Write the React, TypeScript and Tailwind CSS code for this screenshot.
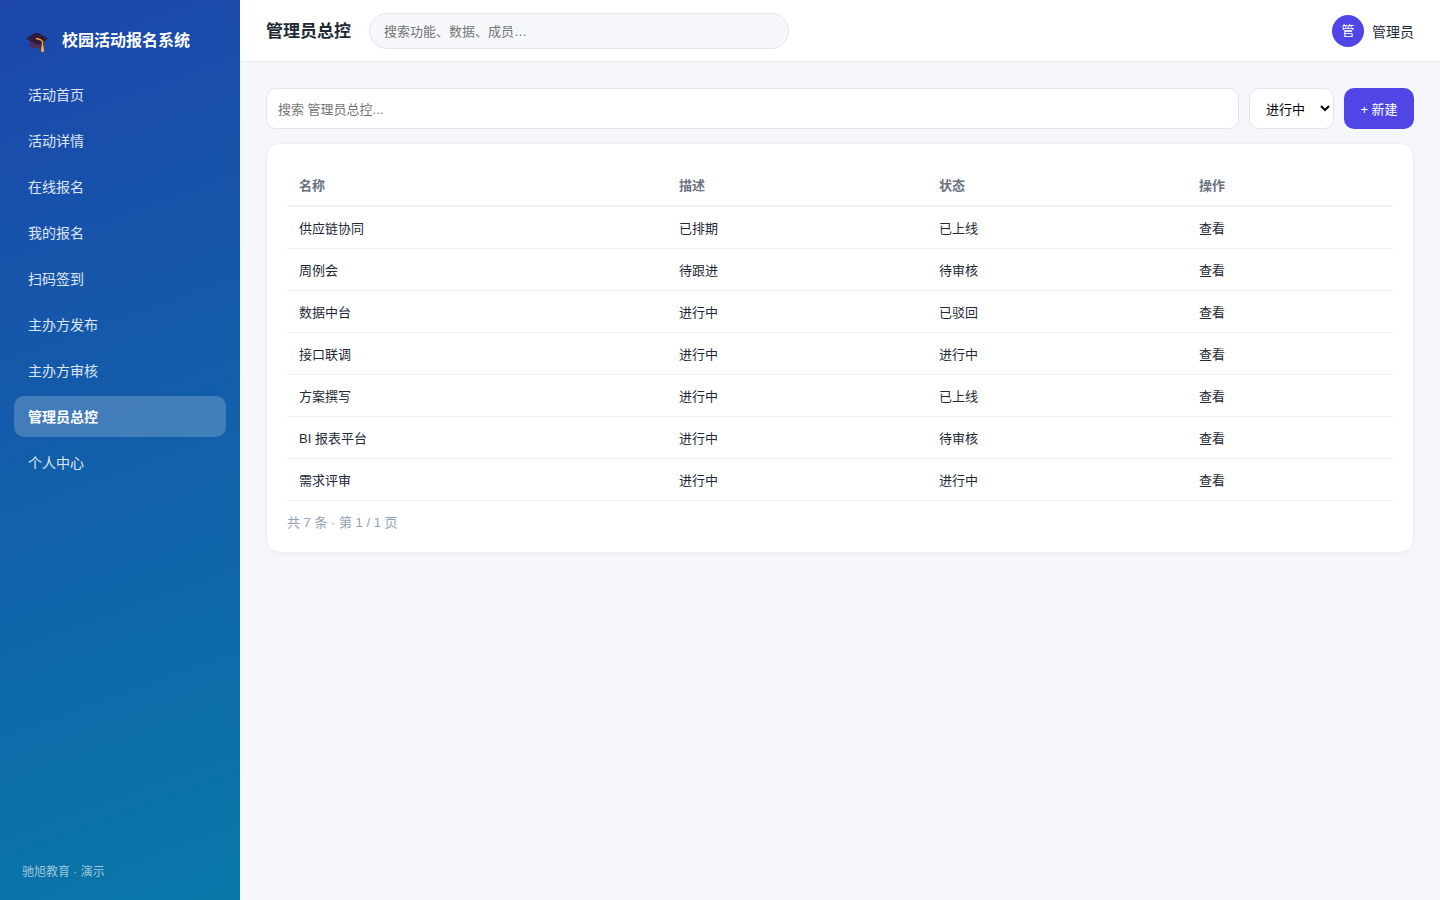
import React, { useState } from "react";

const navItems = [
  "活动首页",
  "活动详情",
  "在线报名",
  "我的报名",
  "扫码签到",
  "主办方发布",
  "主办方审核",
  "管理员总控",
  "个人中心",
];

const columns = [
  { label: "名称", width: "w-[380px]" },
  { label: "描述", width: "w-[260px]" },
  { label: "状态", width: "w-[260px]" },
  { label: "操作", width: "w-[206px]" },
];

const rows = [
  { name: "供应链协同", desc: "已排期", status: "已上线" },
  { name: "周例会", desc: "待跟进", status: "待审核" },
  { name: "数据中台", desc: "进行中", status: "已驳回" },
  { name: "接口联调", desc: "进行中", status: "进行中" },
  { name: "方案撰写", desc: "进行中", status: "已上线" },
  { name: "BI 报表平台", desc: "进行中", status: "待审核" },
  { name: "需求评审", desc: "进行中", status: "进行中" },
];

function CapIcon() {
  return (
    <svg width="24" height="24" viewBox="1 -2 24 24" aria-hidden="true">
      <path d="M4.500 9v5.800c1.600 3 10.400 3.800 14.500.8V9z" fill="#4e2d5c" />
      <path d="M1 7.500 10 2h3.500L23 7.500 15.200 13.600h-3.400z" fill="#2f1b3d" />
      <path
        d="M11 7.500c2.500.4 5.500 1.300 6.500 3v5.200"
        fill="none"
        stroke="#f9a825"
        strokeWidth="1.300"
      />
      <path d="M16.500 15h2l.6 5-1.600 1.500-1.500-1.500z" fill="#ffb02e" />
    </svg>
  );
}

function Sidebar() {
  return (
    <aside className="flex w-60 shrink-0 flex-col bg-[linear-gradient(160deg,#1c46ab,#0878a8)] px-3.5 py-5 text-white">
      <div className="mb-3 flex h-[42px] items-center gap-3 px-3">
        <CapIcon />
        <span className="text-base font-bold">校园活动报名系统</span>
      </div>

      <nav className="flex flex-col gap-[5px]">
        {navItems.map((item) => (
          <a
            key={item}
            href="#"
            className={
              item === "管理员总控"
                ? "rounded-[10px] bg-white/20 px-3.5 pt-3 pb-2.5 text-sm leading-[19px] font-semibold text-white"
                : "rounded-[10px] px-3.5 pt-3 pb-2.5 text-sm leading-[19px] text-white/85"
            }
          >
            {item}
          </a>
        ))}
      </nav>

      <p className="mt-auto px-2 text-xs leading-4 text-white/60">
        驰旭教育 · 演示
      </p>
    </aside>
  );
}

function Header() {
  return (
    <header className="flex h-[62px] items-center border-b border-[#eceef3] bg-white px-[26px]">
      <h1 className="pt-0.5 text-[17px] font-bold">管理员总控</h1>
      <input
        type="search"
        aria-label="全局搜索"
        placeholder="搜索功能、数据、成员…"
        className="ml-[18px] h-9 w-full max-w-[420px] rounded-full border border-[#e2e5ef] bg-[#f5f7fb] px-3.5 pt-0.5 text-[13px] outline-none placeholder:text-[#757575]"
      />
      <div className="ml-auto flex shrink-0 items-center gap-2 text-sm">
        <span className="flex size-8 items-center justify-center rounded-full bg-[#4f46e5] pt-0.5 text-[13px] text-white">
          管
        </span>
        <span className="pt-0.5">管理员</span>
      </div>
    </header>
  );
}

function App() {
  const [status, setStatus] = useState("进行中");

  return (
    <div className="flex min-h-screen bg-[#f5f7fb] font-['Liberation_Sans','Noto_Sans_CJK_SC',sans-serif] text-[#1f2937]">
      <Sidebar />

      <div className="flex min-w-0 flex-1 flex-col">
        <Header />

        <main className="p-[26px]">
          {/* Toolbar */}
          <div className="flex gap-2.5">
            <input
              type="text"
              aria-label="搜索 管理员总控"
              placeholder="搜索 管理员总控..."
              className="h-[41px] min-w-0 flex-1 rounded-[10px] border border-[#e2e5ef] bg-white px-[11px] pt-0.5 text-[13px] outline-none placeholder:text-[#757575]"
            />
            <select
              aria-label="状态"
              value={status}
              onChange={(e) => setStatus(e.target.value)}
              className="h-[41px] w-[85px] rounded-[10px] border border-[#e2e5ef] bg-white pt-0.5 pl-3 text-[13px] text-black"
            >
              <option>进行中</option>
              <option>待审核</option>
              <option>已上线</option>
            </select>
            <button className="h-[41px] w-[70px] rounded-[10px] bg-[#4f46e5] pt-0.5 text-[13px] text-white">
              + 新建
            </button>
          </div>

          {/* Records */}
          <section className="mt-3.5 rounded-[14px] border border-[#eff1f6] bg-white p-5 text-[13px] shadow-[0_1px_4px_rgba(15,23,42,0.04)]">
            <table className="w-full border-separate border-spacing-0 text-left">
              <thead>
                <tr className="text-[#6b7280]">
                  {columns.map(({ label, width }) => (
                    <th
                      key={label}
                      className={`h-[43px] border-b-2 border-[#eef0f5] px-3 pt-0.5 ${width}`}
                    >
                      {label}
                    </th>
                  ))}
                </tr>
              </thead>
              <tbody>
                {rows.map((row) => (
                  <tr key={row.name}>
                    <td className="h-[42px] border-b border-[#eef0f5] px-3 pt-0.5">{row.name}</td>
                    <td className="h-[42px] border-b border-[#eef0f5] px-3 pt-0.5">{row.desc}</td>
                    <td className="h-[42px] border-b border-[#eef0f5] px-3 pt-0.5">{row.status}</td>
                    <td className="h-[42px] border-b border-[#eef0f5] px-3 pt-0.5">
                      <a href="#">查看</a>
                    </td>
                  </tr>
                ))}
              </tbody>
            </table>
            <p className="mt-3 leading-[19px] text-[#94a3b8]">共 7 条 · 第 1 / 1 页</p>
          </section>
        </main>
      </div>
    </div>
  );
}

export default App;
